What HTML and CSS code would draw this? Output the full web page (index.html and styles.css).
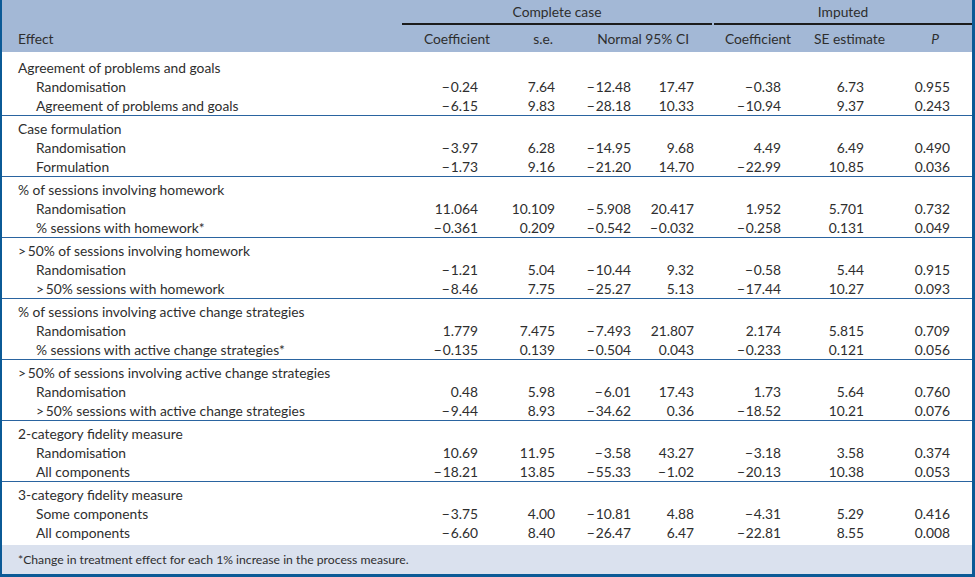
FILE: index.html
```html
<!DOCTYPE html>
<html>
<head>
<meta charset="utf-8">
<link rel="stylesheet" href="styles.css">
</head>
<body>
<div class="frame">
<table class="tbl">
<colgroup>
<col class="c1"><col class="c2"><col class="c3"><col class="c4"><col class="c5"><col class="c6"><col class="c7"><col class="c8">
</colgroup>
<thead>
<tr class="hr1">
<th></th>
<th colspan="4" class="span span-cc"><div class="spanline">Complete case</div></th>
<th colspan="3" class="span span-imp"><div class="spanline">Imputed</div></th>
</tr>
<tr class="hr2">
<th class="h-effect">Effect</th>
<th class="h h2">Coefficient</th>
<th class="h h3">s.e.</th>
<th colspan="2" class="h h45">Normal 95% CI</th>
<th class="h h6">Coefficient</th>
<th class="h h7">SE estimate</th>
<th class="h h8"><i>P</i></th>
</tr>
</thead>
<tbody class="grp first">
<tr class="title"><td colspan="8">Agreement of problems and goals</td></tr>
<tr><td class="lbl">Randomisation</td><td class="n2">−&#8202;0.24</td><td class="n3">7.64</td><td class="n4">−&#8202;12.48</td><td class="n5">17.47</td><td class="n6">−&#8202;0.38</td><td class="n7">6.73</td><td class="n8">0.955</td></tr>
<tr><td class="lbl">Agreement of problems and goals</td><td class="n2">−&#8202;6.15</td><td class="n3">9.83</td><td class="n4">−&#8202;28.18</td><td class="n5">10.33</td><td class="n6">−&#8202;10.94</td><td class="n7">9.37</td><td class="n8">0.243</td></tr>
</tbody>
<tbody class="grp">
<tr class="title"><td colspan="8">Case formulation</td></tr>
<tr><td class="lbl">Randomisation</td><td class="n2">−&#8202;3.97</td><td class="n3">6.28</td><td class="n4">−&#8202;14.95</td><td class="n5">9.68</td><td class="n6">4.49</td><td class="n7">6.49</td><td class="n8">0.490</td></tr>
<tr><td class="lbl">Formulation</td><td class="n2">−&#8202;1.73</td><td class="n3">9.16</td><td class="n4">−&#8202;21.20</td><td class="n5">14.70</td><td class="n6">−&#8202;22.99</td><td class="n7">10.85</td><td class="n8">0.036</td></tr>
</tbody>
<tbody class="grp">
<tr class="title"><td colspan="8">% of sessions involving homework</td></tr>
<tr><td class="lbl">Randomisation</td><td class="n2">11.064</td><td class="n3">10.109</td><td class="n4">−&#8202;5.908</td><td class="n5">20.417</td><td class="n6">1.952</td><td class="n7">5.701</td><td class="n8">0.732</td></tr>
<tr><td class="lbl">% sessions with homework*</td><td class="n2">−&#8202;0.361</td><td class="n3">0.209</td><td class="n4">−&#8202;0.542</td><td class="n5">−&#8202;0.032</td><td class="n6">−&#8202;0.258</td><td class="n7">0.131</td><td class="n8">0.049</td></tr>
</tbody>
<tbody class="grp">
<tr class="title"><td colspan="8">&gt;&#8201;50% of sessions involving homework</td></tr>
<tr><td class="lbl">Randomisation</td><td class="n2">−&#8202;1.21</td><td class="n3">5.04</td><td class="n4">−&#8202;10.44</td><td class="n5">9.32</td><td class="n6">−&#8202;0.58</td><td class="n7">5.44</td><td class="n8">0.915</td></tr>
<tr><td class="lbl">&gt;&#8201;50% sessions with homework</td><td class="n2">−&#8202;8.46</td><td class="n3">7.75</td><td class="n4">−&#8202;25.27</td><td class="n5">5.13</td><td class="n6">−&#8202;17.44</td><td class="n7">10.27</td><td class="n8">0.093</td></tr>
</tbody>
<tbody class="grp">
<tr class="title"><td colspan="8">% of sessions involving active change strategies</td></tr>
<tr><td class="lbl">Randomisation</td><td class="n2">1.779</td><td class="n3">7.475</td><td class="n4">−&#8202;7.493</td><td class="n5">21.807</td><td class="n6">2.174</td><td class="n7">5.815</td><td class="n8">0.709</td></tr>
<tr><td class="lbl">% sessions with active change strategies*</td><td class="n2">−&#8202;0.135</td><td class="n3">0.139</td><td class="n4">−&#8202;0.504</td><td class="n5">0.043</td><td class="n6">−&#8202;0.233</td><td class="n7">0.121</td><td class="n8">0.056</td></tr>
</tbody>
<tbody class="grp">
<tr class="title"><td colspan="8">&gt;&#8201;50% of sessions involving active change strategies</td></tr>
<tr><td class="lbl">Randomisation</td><td class="n2">0.48</td><td class="n3">5.98</td><td class="n4">−&#8202;6.01</td><td class="n5">17.43</td><td class="n6">1.73</td><td class="n7">5.64</td><td class="n8">0.760</td></tr>
<tr><td class="lbl">&gt;&#8201;50% sessions with active change strategies</td><td class="n2">−&#8202;9.44</td><td class="n3">8.93</td><td class="n4">−&#8202;34.62</td><td class="n5">0.36</td><td class="n6">−&#8202;18.52</td><td class="n7">10.21</td><td class="n8">0.076</td></tr>
</tbody>
<tbody class="grp">
<tr class="title"><td colspan="8">2-category fidelity measure</td></tr>
<tr><td class="lbl">Randomisation</td><td class="n2">10.69</td><td class="n3">11.95</td><td class="n4">−&#8202;3.58</td><td class="n5">43.27</td><td class="n6">−&#8202;3.18</td><td class="n7">3.58</td><td class="n8">0.374</td></tr>
<tr><td class="lbl">All components</td><td class="n2">−&#8202;18.21</td><td class="n3">13.85</td><td class="n4">−&#8202;55.33</td><td class="n5">−&#8202;1.02</td><td class="n6">−&#8202;20.13</td><td class="n7">10.38</td><td class="n8">0.053</td></tr>
</tbody>
<tbody class="grp last">
<tr class="title"><td colspan="8">3-category fidelity measure</td></tr>
<tr><td class="lbl">Some components</td><td class="n2">−&#8202;3.75</td><td class="n3">4.00</td><td class="n4">−&#8202;10.81</td><td class="n5">4.88</td><td class="n6">−&#8202;4.31</td><td class="n7">5.29</td><td class="n8">0.416</td></tr>
<tr><td class="lbl">All components</td><td class="n2">−&#8202;6.60</td><td class="n3">8.40</td><td class="n4">−&#8202;26.47</td><td class="n5">6.47</td><td class="n6">−&#8202;22.81</td><td class="n7">8.55</td><td class="n8">0.008</td></tr>
</tbody>
</table>
<div class="foot">*Change in treatment effect for each 1% increase in the process measure.</div>
</div>
</body>
</html>
```

FILE: styles.css
```css
html, body {
  margin: 0;
  padding: 0;
  background: #ffffff;
}
.frame {
  width: 975px;
  height: 577px;
  box-sizing: border-box;
  border-left: 2px solid #0b5a96;
  border-right: 3px solid #0b5a96;
  border-bottom: 3px solid #0b5a96;
  font-family: "Lato", "Noto Sans", sans-serif;
  font-size: 13.8px;
  color: #2e2e2e;
  display: flex;
  flex-direction: column;
}
.tbl {
  width: 970px;
  table-layout: fixed;
  border-collapse: collapse;
  border-spacing: 0;
}
.c1 { width: 400px; }
.c2 { width: 93px; }
.c3 { width: 75px; }
.c4 { width: 75px; }
.c5 { width: 69px; }
.c6 { width: 86px; }
.c7 { width: 95px; }
.c8 { width: 77px; }

thead tr { background: #a3b8d6; }
th { font-weight: normal; padding: 0; line-height: 19px; white-space: nowrap; }
.hr1 th { height: 25px; vertical-align: top; }
.spanline {
  border-bottom: 2px solid #1c1c1c;
  height: 22px;
  line-height: 21px;
  text-align: center;
  margin-top: 1px;
}
.span-cc { padding-right: 2px; }
.hr2 th { padding-top: 4px; padding-bottom: 4px; }
.h-effect { text-align: left; padding-left: 16px !important; }
.h { text-align: right; }
.h2 { padding-right: 5px !important; }
.h3 { padding-right: 17px !important; }
.h45 { padding-right: 25px !important; }
.h6 { padding-right: 9px !important; }
.h7 { padding-right: 10px !important; }
.h8 { padding-right: 33px !important; }

td { padding: 0; line-height: 19px; white-space: nowrap; text-align: right; }
.title td { text-align: left; padding-left: 16px; }
td.lbl { text-align: left; padding-left: 34px; }
.n2 { padding-right: 17px; }
.n3 { padding-right: 15px; }
.n4 { padding-right: 14px; }
.n5 { padding-right: 20px; }
.n6 { padding-right: 19px; }
.n7 { padding-right: 31px; }
.n8 { padding-right: 22px; }

.grp { border-top: 1px solid #2a64a0; }
.grp.first { border-top: none; }
.grp .title td { padding-top: 3px; }
.grp.first .title td { padding-top: 6px; }
.grp.last tr:last-child td { padding-bottom: 2px; }

.foot {
  margin-top: auto;
  background: #dae1ee;
  height: 29px;
  line-height: 29px;
  padding-left: 16px;
  font-size: 12.2px;
  color: #2e2e2e;
}
```
